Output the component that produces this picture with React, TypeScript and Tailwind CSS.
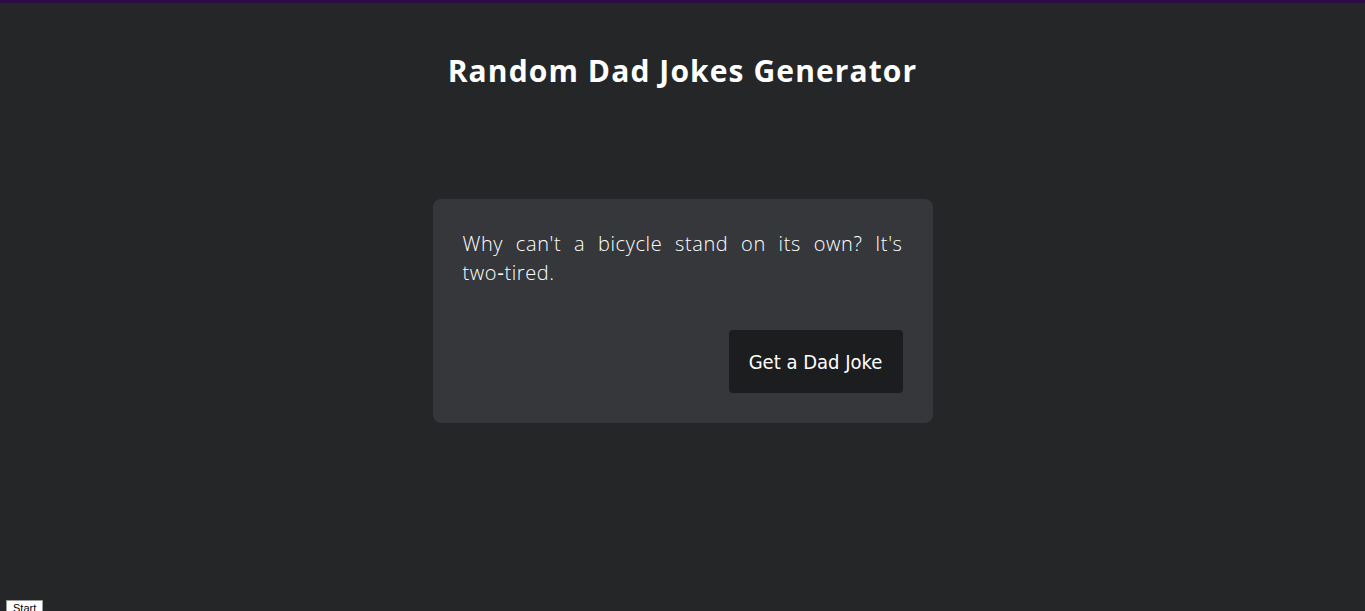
const App = () => {
  return (
    <div className="relative min-h-screen w-full overflow-hidden bg-[#252628] border-t-[3px] border-[#2c0b46]">
      <div className="flex flex-col items-center">
        <h1 className="mt-[45px] text-[30px] font-bold tracking-[1.1px] text-white font-['Open_Sans',sans-serif]">
          Random Dad Jokes Generator
        </h1>

        {/* Joke card */}
        <div className="mt-[106px] w-[500px] rounded-lg bg-[#35373b] p-[30px]">
          <p className="text-justify text-[20px] leading-[29px] font-light tracking-[0.6px] text-white font-['Open_Sans',sans-serif]">
            Why can't a bicycle stand on its own? It's two&#8209;tired.
          </p>
          <div className="mt-[43px] flex justify-end">
            <button className="h-[63px] w-[174px] rounded bg-[#1b1d1f] text-[20px] text-white font-['DejaVu_Sans_Condensed','DejaVu_Sans',sans-serif]">
              Get a Dad Joke
            </button>
          </div>
        </div>
      </div>

      <button className="absolute left-[6px] top-[597px] border border-[#9a9a9a] bg-white px-[6px] text-[11px] leading-[15px] text-black font-['Liberation_Sans',sans-serif]">
        Start
      </button>
    </div>
  );
};

export default App;
